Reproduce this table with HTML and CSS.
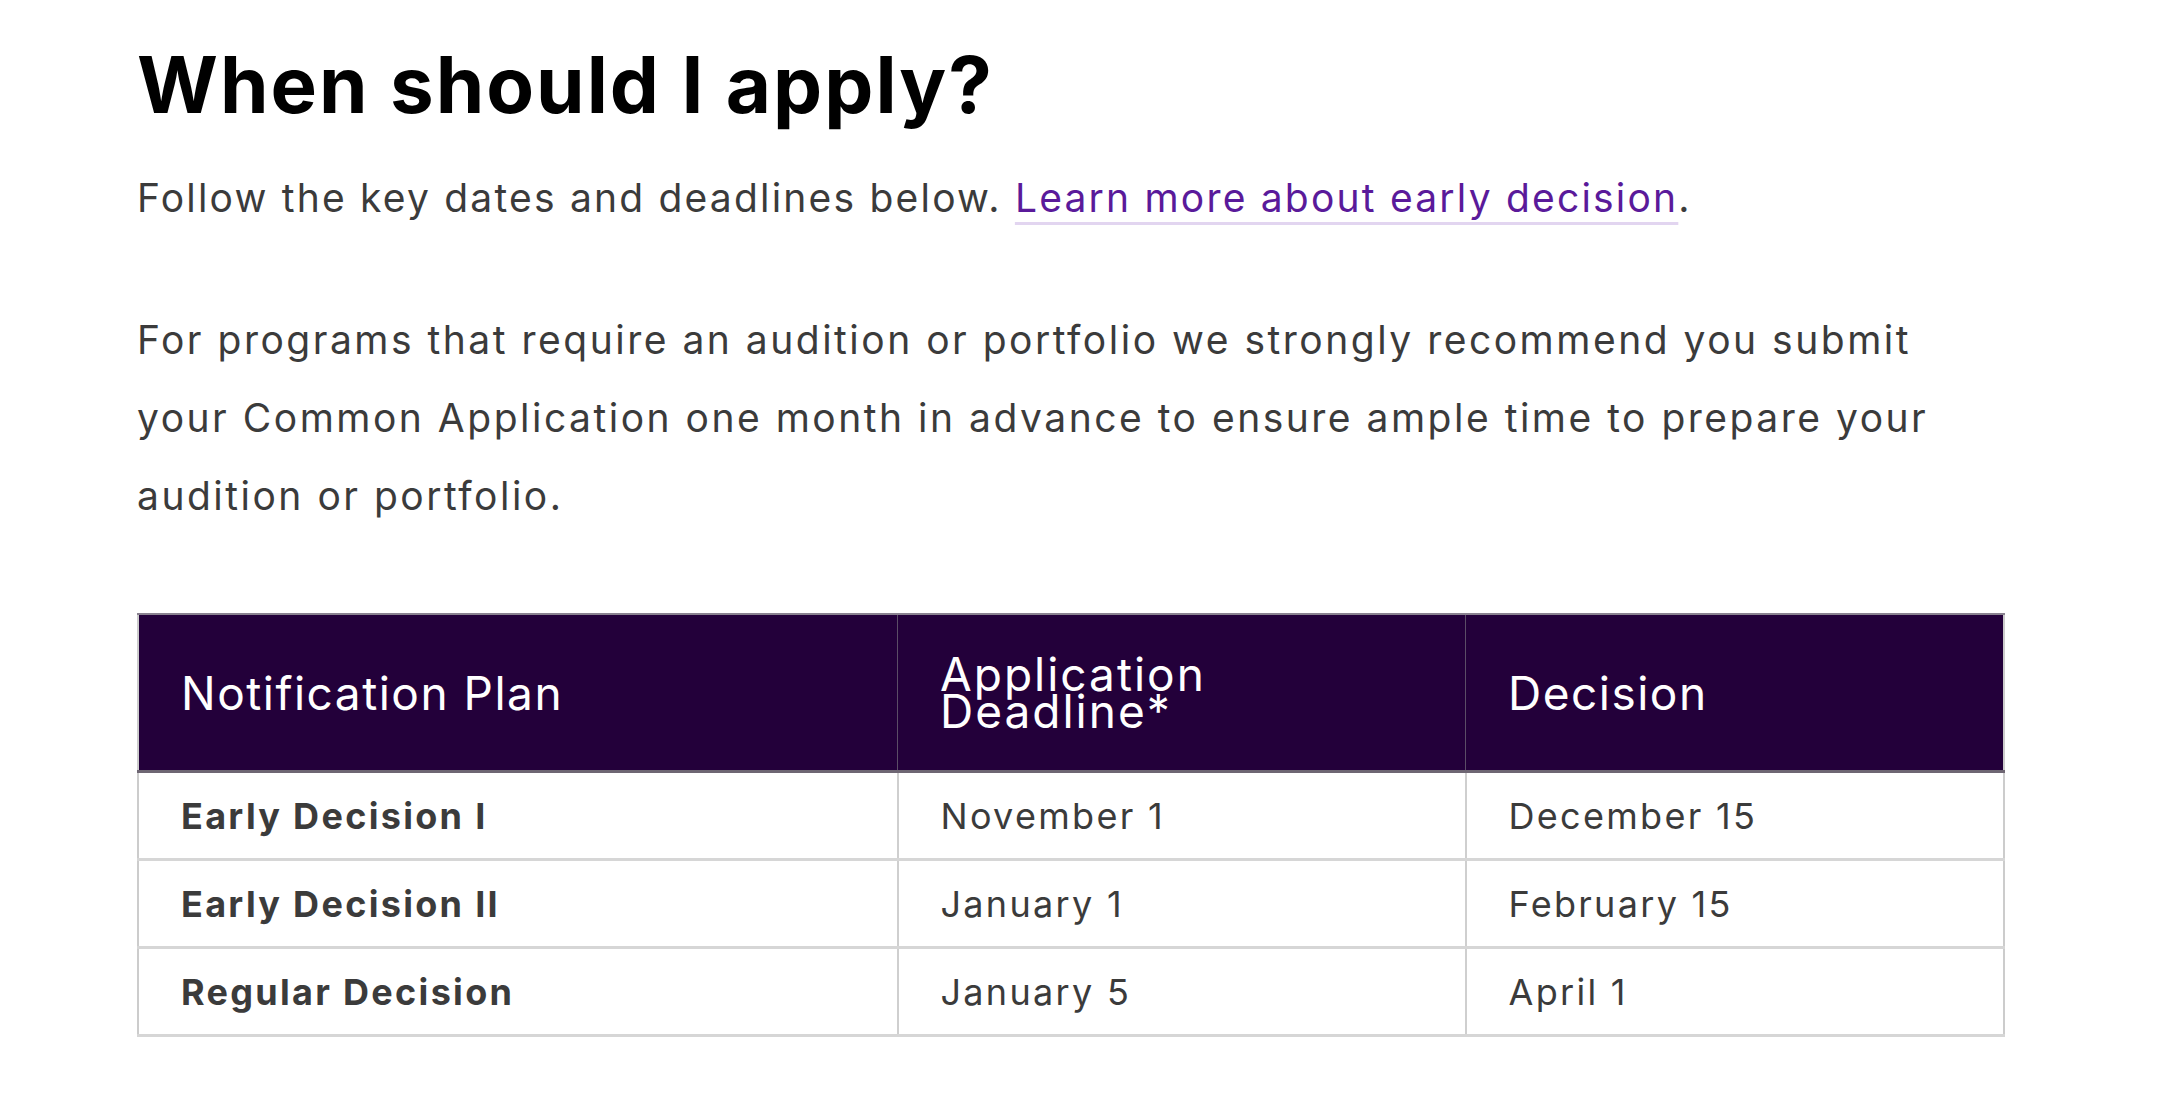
FILE: index.html
```html
<!DOCTYPE html>
<html lang="en">
<head>
<meta charset="utf-8">
<title>When should I apply?</title>
<link rel="stylesheet" href="styles.css">
</head>
<body>
<main class="page">
  <h1 class="title">When should I apply?</h1>
  <p class="lead">Follow the key dates and deadlines below. <a class="link" href="#">Learn more about early decision</a>.</p>
  <p class="body-text">For programs that require an audition or portfolio we strongly recommend you submit your Common Application one month in advance to ensure ample time to prepare your audition or portfolio.</p>
  <table class="dates">
    <thead>
      <tr>
        <th class="col-plan">Notification Plan</th>
        <th class="col-deadline"><span class="th-tight">Application Deadline*</span></th>
        <th class="col-decision">Decision</th>
      </tr>
    </thead>
    <tbody>
      <tr>
        <td class="plan">Early Decision I</td>
        <td>November 1</td>
        <td>December 15</td>
      </tr>
      <tr>
        <td class="plan">Early Decision II</td>
        <td>January 1</td>
        <td>February 15</td>
      </tr>
      <tr>
        <td class="plan">Regular Decision</td>
        <td>January 5</td>
        <td>April 1</td>
      </tr>
    </tbody>
  </table>
</main>
</body>
</html>
```

FILE: styles.css
```css
html, body {
  margin: 0;
  padding: 0;
  background: #ffffff;
}

body {
  font-family: Inter, "Open Sans", "Liberation Sans", sans-serif;
  color: #3b3b3b;
}

.page {
  padding: 0 155px 0 137px;
}

.title {
  margin: 0;
  padding-top: 40px;
  font-size: 78px;
  line-height: 90px;
  font-weight: 700;
  letter-spacing: 2px;
  color: #000000;
}

.lead {
  margin: 44px 0 0;
  font-size: 39px;
  line-height: 48px;
  letter-spacing: 2.2px;
}

.link {
  color: #5a1a9a;
  text-decoration: underline;
  text-decoration-color: #e2d5f0;
  text-decoration-thickness: 3px;
  text-underline-offset: 10px;
}

.body-text {
  margin: 79px 0 0;
  max-width: 1830px;
  font-size: 39px;
  line-height: 78px;
  letter-spacing: 2.5px;
}

.dates {
  margin-top: 78px;
  width: 1868px;
  border-collapse: collapse;
  border-left: 2px solid #cccccc;
  border-right: 2px solid #cccccc;
  border-bottom: 3px solid #d6d6d6;
}

.dates th {
  background: #23003a;
  color: #ffffff;
  font-weight: 400;
  font-size: 46px;
  line-height: 50px;
  letter-spacing: 1.5px;
  text-align: left;
  height: 155px;
  padding: 0 42px;
  border-top: 2px solid #8a8290;
  border-bottom: 3px solid #6e6673;
  border-right: 1px solid #5b4d66;
}

.th-tight {
  display: block;
  max-width: 320px;
  line-height: 37px;
  letter-spacing: 2px;
}

.dates th:last-child {
  border-right: none;
}

.col-plan {
  width: 674px;
}

.col-deadline {
  width: 483px;
}

.dates td {
  font-size: 36px;
  letter-spacing: 2.3px;
  height: 85px;
  padding: 0 42px;
  color: #3b3b3b;
  border-bottom: 3px solid #d6d6d6;
  border-right: 2px solid #cfcfcf;
}

.dates td:last-child {
  border-right: none;
}

.dates td.plan {
  font-weight: 700;
}
```
